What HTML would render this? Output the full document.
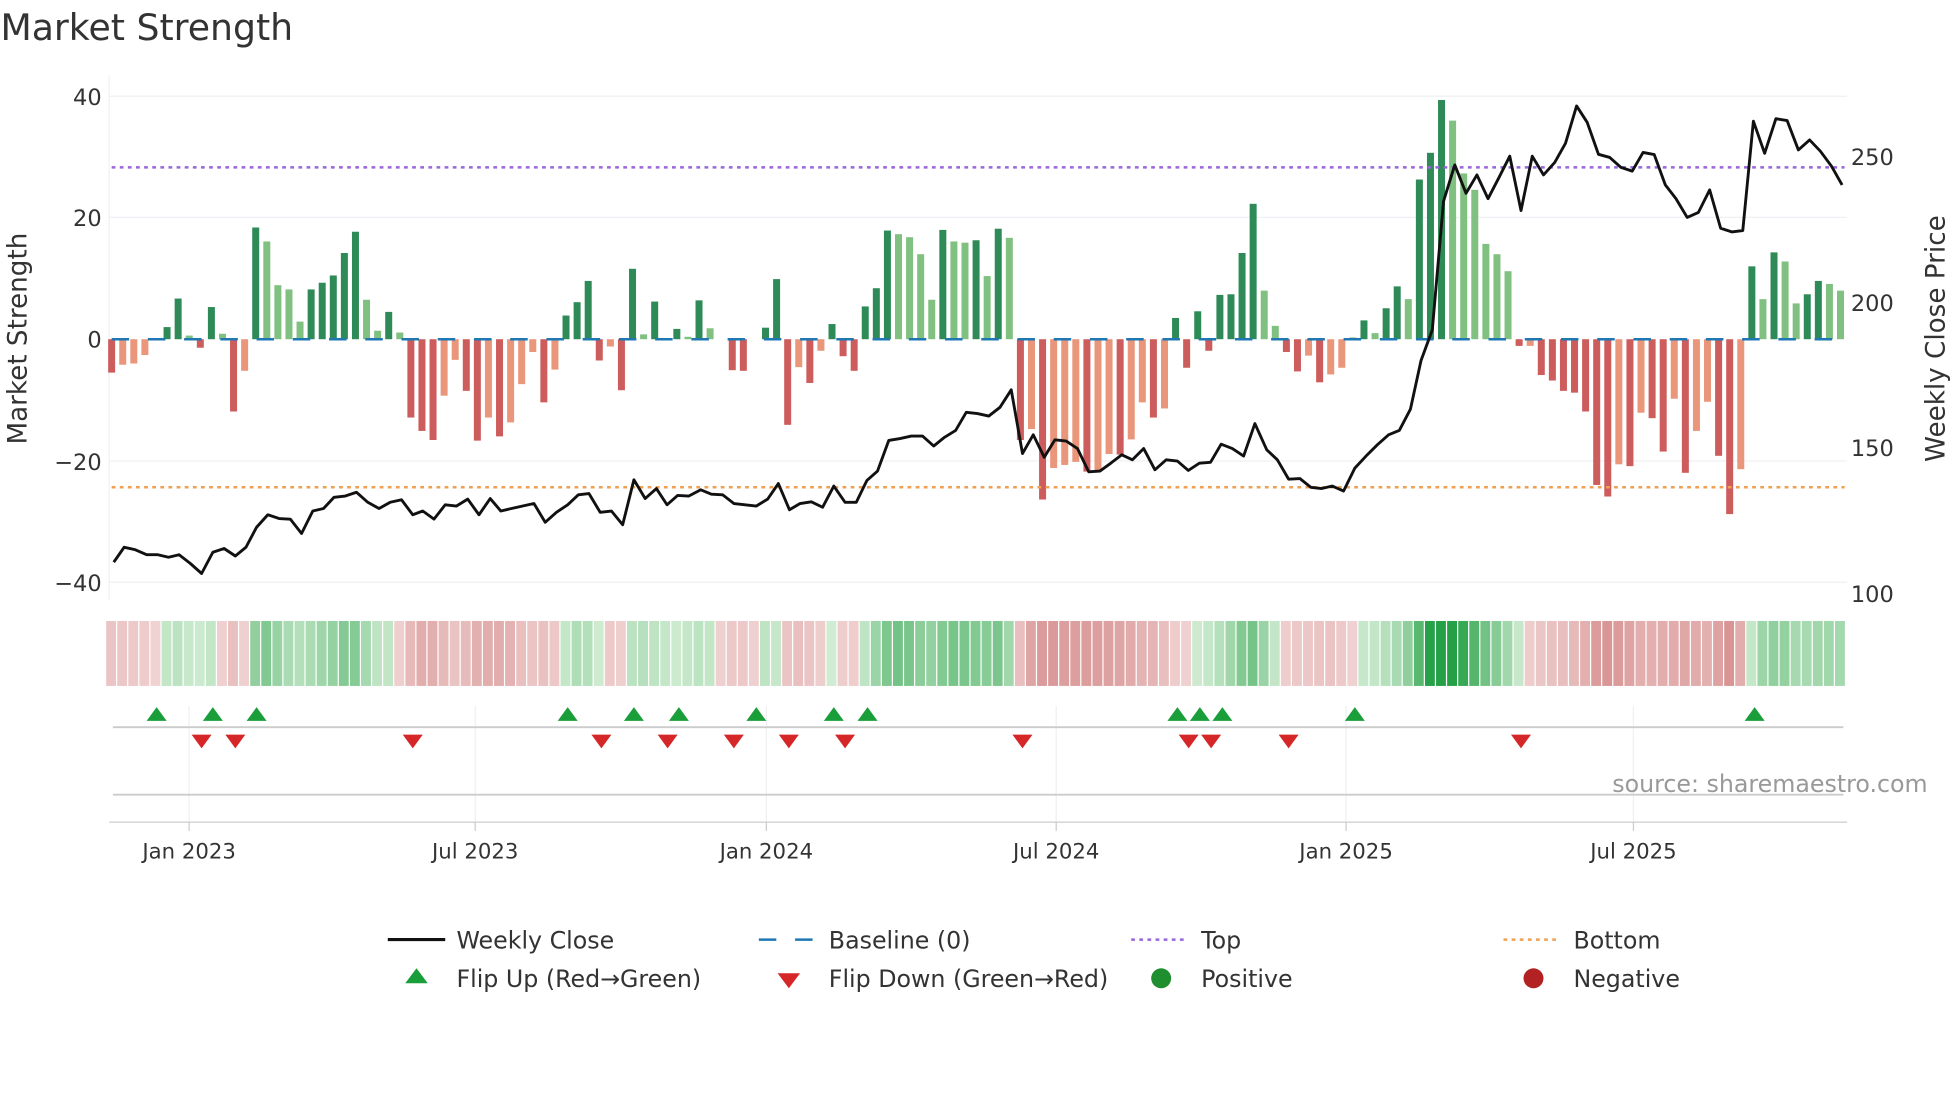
<!DOCTYPE html>
<html><head><meta charset="utf-8">
<style>
html,body{margin:0;padding:0;background:#fff;}
svg{display:block;}
text{font-family:"DejaVu Sans","Liberation Sans",sans-serif;fill:#333;}
</style></head>
<body>
<svg id="s" width="1960" height="1102" viewBox="0 0 1568 882" xmlns="http://www.w3.org/2000/svg">
<rect width="1568" height="882" fill="#fff"/>
<text x="0" y="32" font-size="29">Market Strength</text>
<g stroke="#eef0f3" stroke-width="1">
<line x1="87" x2="1478" y1="77" y2="77"/><line x1="87" x2="1478" y1="174" y2="174"/>
<line x1="87" x2="1478" y1="369" y2="369"/><line x1="87" x2="1478" y1="466" y2="466"/>
<line x1="87" x2="87" y1="60" y2="480"/>
</g>
<g font-size="18" text-anchor="end">
<text x="81" y="84">40</text><text x="81" y="181">20</text><text x="81" y="278">0</text>
<text x="81" y="376">−20</text><text x="81" y="473">−40</text>
</g>
<g font-size="18">
<text x="1481" y="132">250</text><text x="1481" y="249">200</text>
<text x="1481" y="365">150</text><text x="1481" y="482">100</text>
</g>
<text transform="translate(21,271) rotate(-90)" font-size="21" text-anchor="middle">Market Strength</text>
<text transform="translate(1556,271) rotate(-90)" font-size="21" text-anchor="middle">Weekly Close Price</text>
<g id="bars"></g>
<line x1="89" x2="1476" y1="271.5" y2="271.5" stroke="#1f77b4" stroke-width="2" stroke-dasharray="14 15"/>
<line x1="89" x2="1476" y1="134" y2="134" stroke="#9966dd" stroke-width="2" stroke-dasharray="3 3.5"/>
<line x1="89" x2="1476" y1="390" y2="390" stroke="#f0a050" stroke-width="2" stroke-dasharray="3 3.5"/>
<polyline id="price" fill="none" stroke="#111" stroke-width="2.3" stroke-linejoin="round"/>
<g id="strip"></g>
<g stroke="#eef0f3" stroke-width="1" id="vg"></g>
<line x1="90" x2="1475" y1="582" y2="582" stroke="#ccc" stroke-width="1.5"/>
<line x1="90" x2="1475" y1="636" y2="636" stroke="#ccc" stroke-width="1.5"/>
<g id="marks"></g>
<line x1="87" x2="1478" y1="658" y2="658" stroke="#ccc" stroke-width="1"/>
<g font-size="17" text-anchor="middle">
<text x="151" y="687">Jan 2023</text><text x="380" y="687">Jul 2023</text>
<text x="613" y="687">Jan 2024</text><text x="845" y="687">Jul 2024</text>
<text x="1077" y="687">Jan 2025</text><text x="1307" y="687">Jul 2025</text>
</g>
<text x="1290" y="634" font-size="19" style="fill:#999">source: sharemaestro.com</text>
<g font-size="19">
<line x1="310" x2="356" y1="752" y2="752" stroke="#111" stroke-width="2.5"/>
<text x="365" y="759">Weekly Close</text>
<line x1="607" x2="652" y1="752" y2="752" stroke="#1f77b4" stroke-width="2" stroke-dasharray="14 15"/>
<text x="663" y="759">Baseline (0)</text>
<line x1="905" x2="948" y1="752" y2="752" stroke="#9966dd" stroke-width="2" stroke-dasharray="3 3.5"/>
<text x="961" y="759">Top</text>
<line x1="1203" x2="1246" y1="752" y2="752" stroke="#f0a050" stroke-width="2" stroke-dasharray="3 3.5"/>
<text x="1259" y="759">Bottom</text>
<polygon points="324,787 342,787 333,775" fill="#1a9e3a"/>
<text x="365" y="790">Flip Up (Red→Green)</text>
<polygon points="622,779 640,779 631,791" fill="#d62728"/>
<text x="663" y="790">Flip Down (Green→Red)</text>
<circle cx="929" cy="783" r="8" fill="#1e8e2e"/>
<text x="961" y="790">Positive</text>
<circle cx="1227" cy="783" r="8" fill="#b22222"/>
<text x="1259" y="790">Negative</text>
</g>
</svg>
<script>
var V=[-5.5,-4.2,-4.0,-2.6,0.2,2.0,6.7,0.6,-1.4,5.3,0.9,-11.9,-5.2,18.4,16.1,8.9,8.2,2.9,8.2,9.3,10.5,14.2,17.7,6.5,1.4,4.5,1.1,-12.9,-15.1,-16.6,-9.3,-3.4,-8.5,-16.7,-12.9,-16,-13.7,-7.4,-2.1,-10.4,-5,3.9,6.1,9.6,-3.5,-1.2,-8.4,11.6,0.8,6.2,0.1,1.7,0.4,6.4,1.8,0,-5.1,-5.2,0,1.9,9.9,-14.1,-4.6,-7.2,-1.9,2.5,-2.8,-5.2,5.4,8.4,17.9,17.3,16.8,14,6.5,18,16.1,15.9,16.3,10.4,18.2,16.7,-16.6,-14.8,-26.4,-21.2,-20.7,-20.2,-21.8,-21.6,-18.9,-19,-16.5,-10.4,-12.9,-11.4,3.5,-4.7,4.6,-1.9,7.3,7.4,14.2,22.3,8,2.2,-2.1,-5.3,-2.7,-7.1,-5.8,-4.7,0.3,3.1,1,5.1,8.7,6.6,26.3,30.7,39.4,36,27.3,24.6,15.7,14,11.2,-1.1,-1.1,-5.9,-6.8,-8.5,-8.8,-11.9,-24,-25.9,-20.6,-20.9,-12.1,-13,-18.5,-9.8,-22,-15.1,-10.3,-19.2,-28.8,-21.4,12,6.6,14.3,12.8,5.9,7.4,9.6,9.1,8];
var T="dllldddldd"+"ldldlllldd"+"dddlldlddd"+"llddldllld"+"lddddlddld"+"ldldlddddd"+"ddldlddddd"+"dlllldlldl"+"dldldllldl"+"ldlldldddd"+"ddddllddld"+"llldlddldd"+"dlllllldld"+"ddddddldld"+"dldllddldl"+"dllddll";
var NS="http://www.w3.org/2000/svg";
function el(n,a,p){var e=document.createElementNS(NS,n);for(var k in a)e.setAttribute(k,a[k]);p.appendChild(e);return e;}
var bars=document.getElementById('bars'),strip=document.getElementById('strip');
var S=4.86,Z=271.5,dx=8.87;
for(var i=0;i<V.length;i++){
 var v=V[i],cx=89+i*dx,d=T[i]=='d';
 if(Math.abs(v)>0.05){
  var c=v>0?(d?'#2e8b57':'#80c080'):(d?'#cd5c5c':'#e9967a');
  var h=Math.abs(v)*S;
  el('rect',{x:cx-2.8,y:v>0?Z-h:Z,width:5.6,height:h,fill:c},bars);
 }
 var s=(V[Math.max(0,i-1)]+2*v+V[Math.min(V.length-1,i+1)])/4;
 var t=Math.min(Math.abs(s)/32,1),col;
 if(s>=0){col='rgb('+Math.round(208-170*t)+','+Math.round(236-76*t)+','+Math.round(210-140*t)+')';}
 else{col='rgb('+Math.round(240-30*t)+','+Math.round(210-80*t)+','+Math.round(210-80*t)+')';}
 el('rect',{x:cx-4.4,y:497,width:7.9,height:52,fill:col},strip);
}
var P=[[90.7,450],[99,438],[108,440],[117,444],[126,444],[134.5,446],[143,444],[152,451],[161,459],[170,442],[179,439],[188,445],[196.5,438],[205,422],[214,412],[223,415],[232,415.5],[241,427],[250,409],[258.6,407],[267,398],[276,397],[285,394],[294,402],[303,407],[312,402],[321,400],[330,412],[338,409],[347,415.5],[356,404],[365,405],[374,399.5],[383,412],[392,399],[400.5,409],[409,407],[418,405],[427,403],[436,418],[445,410],[454,404],[462.5,396],[471,395],[480,410],[489,409],[498,420],[507,384],[516,399],[525,391],[533.5,404],[542,396.5],[551,397],[560.5,392],[569,395.5],[578,396],[587,403],[596,404],[605,405],[614,399.5],[622.6,387],[631.5,408],[640,403],[649,401.6],[658,406],[667,389],[676,402],[685,402],[693.5,384.5],[702,377],[711,352.5],[720,351],[729,349],[738,349],[747,357],[755.6,350],[764.5,344.5],[773,330],[782,331],[791,333],[800,326],[809,312],[818,363],[826.6,348],[835.4,366],[844,352],[853,353],[862,359],[871,377.6],[880,377],[888.7,370.7],[897.5,364],[906,368],[915,359],[924,376],[933,368],[942,369],[950.7,376.5],[959.6,370.7],[968.5,370],[977,355.5],[986,359],[995,365],[1004,339],[1013.5,360],[1022,368],[1031,383.5],[1040,383],[1048.7,390],[1057.5,391],[1066,389],[1075,393],[1084,374.7],[1093,365],[1102,356],[1111,348],[1119.6,344.5],[1128.5,327.5],[1137,288.5],[1146,264],[1155,161],[1164,132],[1173,154.7],[1181.7,140],[1190.6,159],[1199.4,142],[1208,125],[1217,168.5],[1226,125],[1235,140],[1244,130],[1252.6,114.7],[1261.5,84.8],[1270,98],[1279,123.5],[1288,126],[1297,134],[1306,137],[1314.7,122],[1323.6,123.7],[1332.5,148],[1341,159],[1350,174],[1359,170],[1368,152],[1376.8,182.7],[1385.7,185.6],[1394.5,184.5],[1403,97],[1412,122.7],[1421,95],[1430,96.5],[1439,120],[1448,112],[1456.6,121],[1465.5,133],[1474,148]];
document.getElementById('price').setAttribute('points',P.map(function(p){return p.join(',');}).join(' '));
var vg=document.getElementById('vg');
[151,380,613,845,1077,1307].forEach(function(x){el('line',{x1:x,x2:x,y1:565,y2:658},vg);el('line',{x1:x,x2:x,y1:658,y2:665,stroke:'#ccc'},vg);});
var mk=document.getElementById('marks');
[125,170,205,454,507,543,605,667,694,942,960,978,1084,1404].forEach(function(x){el('polygon',{points:(x-8)+',577 '+(x+8)+',577 '+x+',566',fill:'#1a9e3a'},mk);});
[161,188,330,481,534,587,631,676,818,951,969,1031,1217].forEach(function(x){el('polygon',{points:(x-8)+',588 '+(x+8)+',588 '+x+',599',fill:'#d62728'},mk);});
</script>
</body></html>
